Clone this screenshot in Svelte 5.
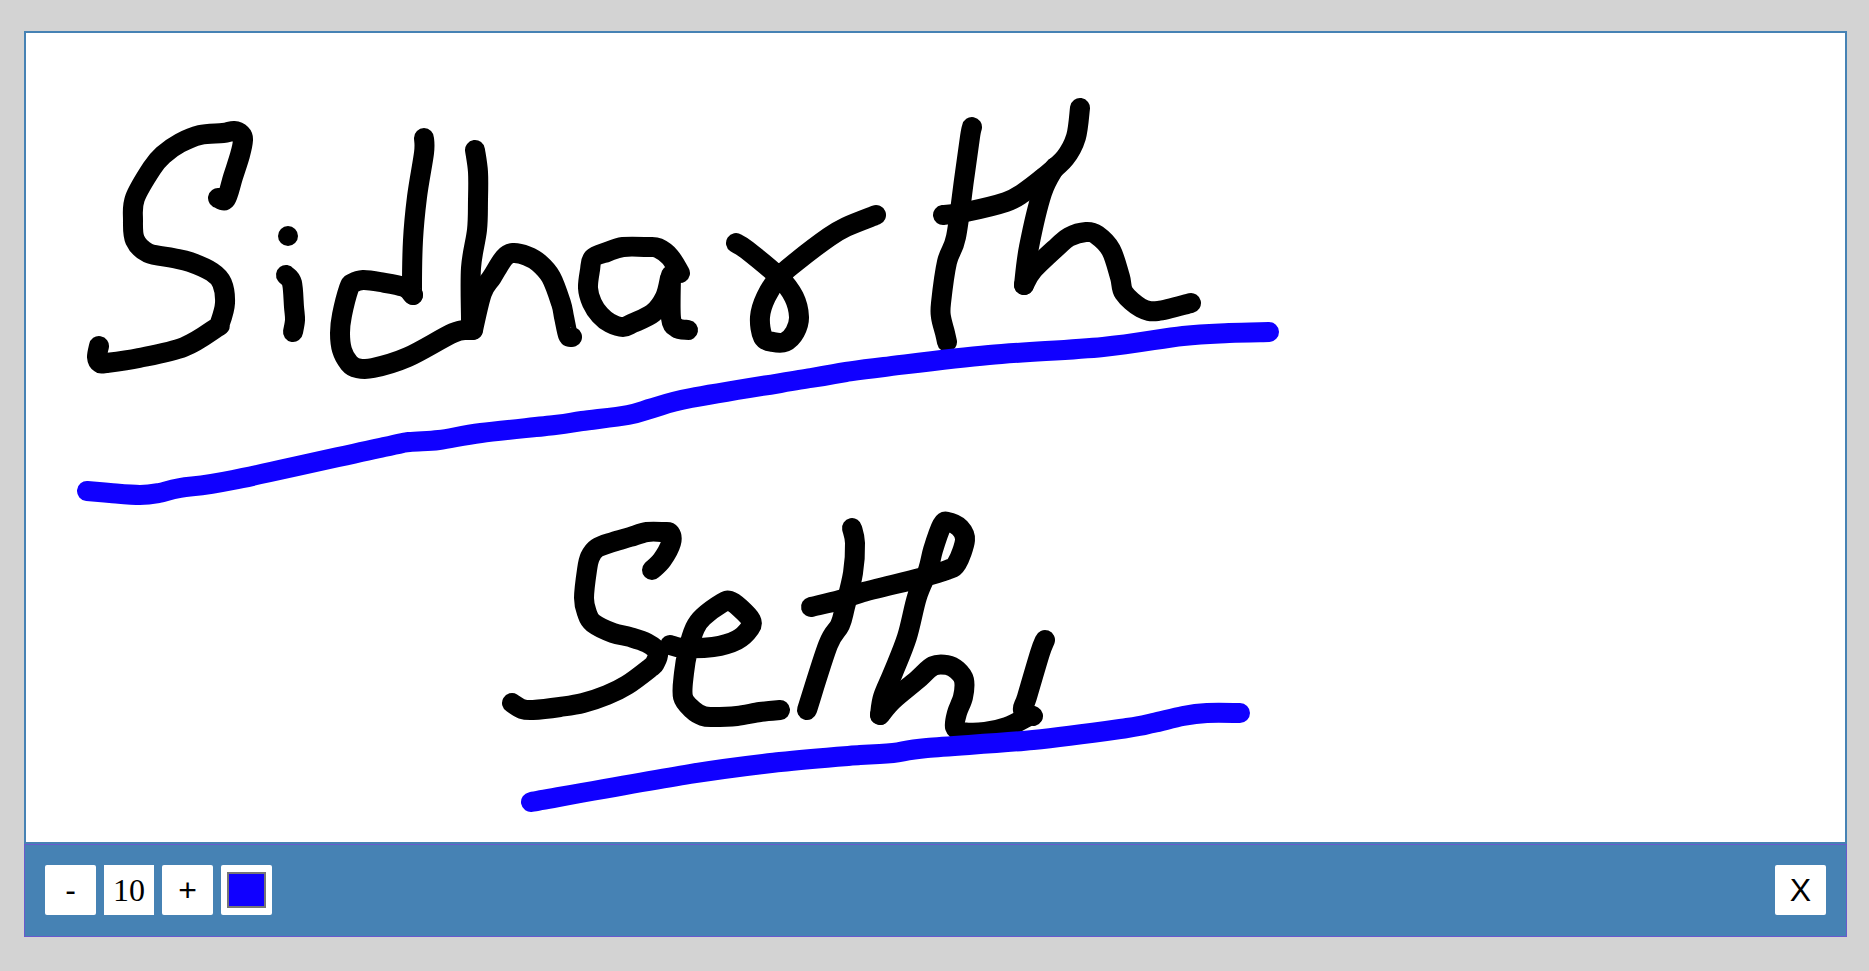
<script>
    let size = $state(10);
    let color = "#1000ff";

    // handwriting strokes, in page pixels
    const inkStrokes = [
        // S
        "218,198 226,199 233,177 240,155 243,140 241,134 234,131 223,133 200,135 180,143 163,155 152,168 135,198 133,220 135,240 148,253 173,258 190,262 212,272 222,283 225,303 220,323 216,328 184,347 139,358 106,363 100,363 97,357 99,346",
        // i
        "288,236 288,236",
        "286,275 292,283 294,307 295,320 293,332",
        // d
        "424,138 424,153 417,197 413,240 412,287 413,295",
        "413,295 404,287 380,282 363,280 353,283 349,288 342,315 340,333 342,350 349,363 357,368 373,368 408,357 453,333 469,330 473,330",
        // h
        "475,150 478,172 478,200 477,230 471,268 471,320 471,330",
        "473,330 482,293 492,277 504,258 513,253 527,256 539,263 551,277 561,303 564,317 568,335 572,337",
        // a
        "680,273 670,257 658,248 647,247 623,247 607,252 593,258 590,270 588,288 592,303 600,315 610,323 623,327 633,323 653,313 665,297 670,278",
        "671,275 671,318 677,328 688,330",
        // r
        "736,243 747,250 779,277 794,297 799,317 795,332 785,342 773,342 763,337 760,317 766,297 779,277 796,262 829,237 846,227 876,215",
        // t
        "972,127 970,137 964,180 956,237 947,262 941,303 941,317 945,333 947,342",
        // h
        "943,215 966,212 1006,202 1023,193 1044,177 1065,158 1076,137 1080,108",
        "1055,167 1042,193 1029,247 1024,285",
        "1024,285 1033,270 1057,247 1069,237 1086,232 1097,235 1111,250 1120,277 1124,293 1141,308 1158,311 1191,303",
        // S
        "652,570 662,560 671,543 670,533 663,532 647,532 630,537 613,542 597,548 590,557 587,570 584,598 587,613 593,623 613,633 630,637 647,643 658,652 655,663 650,668 627,685 607,695 583,703 560,707 533,710 522,709 512,703",
        // e
        "670,645 683,648 713,647 737,640 750,628 751,620 740,608 730,601 722,603 703,617 695,628 688,650 684,673 683,697 693,710 703,716 713,717 737,716 760,712 780,710",
        // t
        "852,528 855,543 853,573 845,607 840,625 828,645 807,710",
        // h
        "811,607 840,600 860,593 920,578 947,570 957,563 965,540 960,528 948,522 942,525 933,550 928,570 917,597 907,637 893,673 883,697 880,715",
        "880,715 893,700 917,680 933,666 947,665 957,670 964,680 963,697 957,713 955,727 963,732 985,732 1007,727 1027,717",
        // i
        "1045,640 1040,653 1027,697 1023,710 1033,716",
    ];

    const underlines = [
        "87,491 110,493 140,495 159,493 180,488 233,480 384,447 409,442 439,440 481,433 555,425 582,421 628,415 653,408 691,398 811,378 846,372 884,367 989,355 1103,347 1183,336 1229,333 1269,332",
        "531,802 690,774 780,762 860,755 893,753 927,748 1033,740 1127,728 1153,723 1183,716 1207,713 1240,713",
    ];

    // Catmull-Rom through the traced points, so the pen looks less faceted
    function smooth(points) {
        const p = points.split(" ").map((pair) => pair.split(",").map(Number));
        let d = `M${p[0][0]} ${p[0][1]}`;
        if (p.length === 2 && p[0][0] === p[1][0] && p[0][1] === p[1][1]) {
            return d + `L${p[1][0]} ${p[1][1]}`;
        }
        for (let i = 0; i < p.length - 1; i++) {
            const a = p[i - 1] ?? p[i];
            const b = p[i];
            const c = p[i + 1];
            const e = p[i + 2] ?? c;
            const x1 = b[0] + (c[0] - a[0]) / 6;
            const y1 = b[1] + (c[1] - a[1]) / 6;
            const x2 = c[0] - (e[0] - b[0]) / 6;
            const y2 = c[1] - (e[1] - b[1]) / 6;
            d += `C${x1.toFixed(1)} ${y1.toFixed(1)} ${x2.toFixed(1)} ${y2.toFixed(1)} ${c[0]} ${c[1]}`;
        }
        return d;
    }
</script>

<div class="board">
    <div class="canvas">
        <svg viewBox="26 33 1819 809" width="1819" height="809">
            {#each inkStrokes as points}
                <path d={smooth(points)} class="stroke" stroke="#000" />
            {/each}
            {#each underlines as points}
                <path d={smooth(points)} class="stroke" stroke={color} />
            {/each}
        </svg>
    </div>
    <div class="toolbar">
        <div class="tools">
            <button class="tool" onclick={() => size--}>-</button>
            <div class="size">{size}</div>
            <button class="tool" onclick={() => size++}>+</button>
            <button class="tool swatch" aria-label="Colour">
                <span style="background-color: {color}"></span>
            </button>
        </div>
        <button class="tool">X</button>
    </div>
</div>

<style>
    :global(body) {
        margin: 0;
        background-color: lightgray;
    }

    .board {
        display: flex;
        flex-direction: column;
        width: 1823px;
        height: 906px;
        margin: 31px 0 0 24px;
    }

    .canvas {
        flex: 1;
        min-height: 0;
        box-sizing: border-box;
        border: 2px solid steelblue;
        background-color: white;
    }

    svg {
        display: block;
    }

    .stroke {
        fill: none;
        stroke-width: 20;
        stroke-linecap: round;
        stroke-linejoin: round;
    }

    .toolbar {
        display: flex;
        justify-content: space-between;
        align-items: center;
        box-sizing: border-box;
        height: 93px;
        padding: 0 20px 1px;
        border: 1px solid slateblue;
        background-color: steelblue;
    }

    .tools {
        display: flex;
        gap: 8px;
    }

    .tool {
        width: 51px;
        height: 50px;
        padding: 0;
        border: none;
        border-radius: 2px;
        background-color: white;
        color: black;
        font-family: "Liberation Sans", Arial, sans-serif;
        font-size: 32px;
    }

    .size {
        width: 50px;
        height: 50px;
        background-color: white;
        color: black;
        font-family: "Liberation Serif", "Times New Roman", serif;
        font-size: 32px;
        line-height: 50px;
        text-align: center;
    }

    .swatch {
        display: flex;
        align-items: center;
        justify-content: center;
    }

    .swatch span {
        box-sizing: border-box;
        width: 39px;
        height: 36px;
        border: 2px solid #767676;
    }
</style>
